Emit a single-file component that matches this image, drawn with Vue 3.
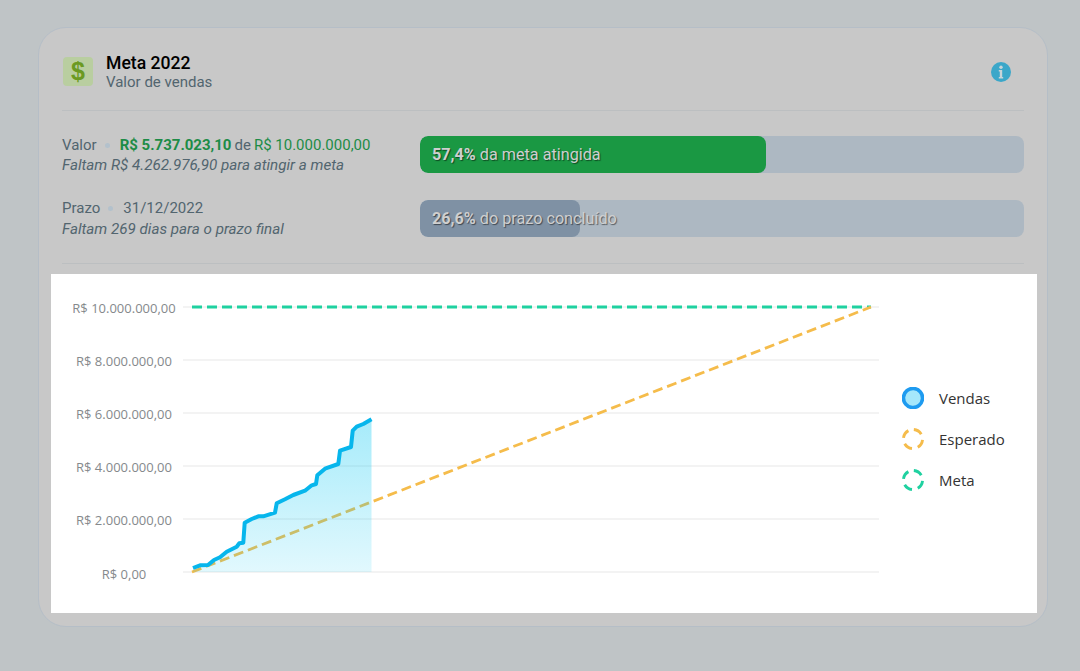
<script setup>
const sales = [[193,568],[200,565.3],[208,565],[214,560],[220,557.3],[226.7,551.7],[236.7,546.7],[239.3,543.3],[243.3,542.7],[244.7,522.7],[251.7,519],[258.3,516.3],[263.3,516.3],[275,512.7],[276.7,503.3],[285,499.3],[293.3,495],[305,490.7],[311.7,485.3],[316,484],[317.3,475.3],[325,468.7],[338.3,464],[340,450.7],[351,447],[352.7,430.7],[356.7,426.7],[363.3,424],[371.5,419.3]]
const offset = ([x, y]) => `${x - 51},${y - 274}`
const line = sales.map(offset).join(' ')
const area = `${line} ${371.5 - 51},${572 - 274} ${193 - 51},${572 - 274}`
const ticks = [
  { label: 'R$ 10.000.000,00', y: 33, ty: 38.5 },
  { label: 'R$ 8.000.000,00', y: 86, ty: 91.5 },
  { label: 'R$ 6.000.000,00', y: 139, ty: 145 },
  { label: 'R$ 4.000.000,00', y: 192, ty: 198 },
  { label: 'R$ 2.000.000,00', y: 245, ty: 251 },
  { label: 'R$ 0,00', y: 298, ty: 304.5 },
]
const legend = [
  { label: 'Vendas', kind: 'sales' },
  { label: 'Esperado', kind: 'expected' },
  { label: 'Meta', kind: 'goal' },
]
</script>

<template>
  <main class="page">
    <section class="card">
      <header class="head">
        <div class="badge">$</div>
        <div class="titles">
          <h1>Meta 2022</h1>
          <p>Valor de vendas</p>
        </div>
        <svg class="info" width="22" height="22" viewBox="0 0 22 22">
          <circle cx="11" cy="11" r="10" fill="#3ba7c9" />
          <circle cx="11" cy="6.2" r="1.7" fill="#c8d4d8" />
          <path d="M8.8 9h3.4v7h1v1.6H8.8V16h1v-5.4h-1z" fill="#c8d4d8" />
        </svg>
      </header>

      <div class="stats">
        <div class="stat">
          <div class="copy">
            <div class="line">
              <span>Valor</span><i class="dot"></i><b class="green">R$ 5.737.023,10</b>
              <span class="de">de</span> <span class="green">R$ 10.000.000,00</span>
            </div>
            <em>Faltam R$ 4.262.976,90 para atingir a meta</em>
          </div>
          <div class="track">
            <div class="fill fill-green"></div>
            <div class="bar-label"><b>57,4%</b> da meta atingida</div>
          </div>
        </div>
        <div class="stat">
          <div class="copy">
            <div class="line">
              <span>Prazo</span><i class="dot"></i><span>31/12/2022</span>
            </div>
            <em>Faltam 269 dias para o prazo final</em>
          </div>
          <div class="track">
            <div class="fill fill-gray"></div>
            <div class="bar-label"><b>26,6%</b> do prazo concluído</div>
          </div>
        </div>
      </div>

      <div class="chart">
        <svg class="plot" width="850" height="339" viewBox="0 0 850 339">
          <defs>
            <linearGradient id="salesFill" x1="0" y1="0" x2="0" y2="1">
              <stop offset="0" stop-color="#09c8f2" stop-opacity="0.36" />
              <stop offset="1" stop-color="#09c8f2" stop-opacity="0.12" />
            </linearGradient>
          </defs>
          <g v-for="t in ticks" :key="t.y">
            <line x1="132" x2="828" :y1="t.y" :y2="t.y" stroke="#efefef" stroke-width="1.5" />
            <text x="73" :y="t.ty" text-anchor="middle" class="tick">{{ t.label }}</text>
          </g>
          <line x1="141" y1="33" x2="820" y2="33" stroke="#1fd1a0" stroke-width="2.8" stroke-dasharray="10 5" />
          <line x1="141" y1="298" x2="820" y2="33" stroke="#f5bc4b" stroke-width="2.8" stroke-dasharray="10 5" />
          <polygon :points="area" fill="url(#salesFill)" />
          <polyline :points="line" fill="none" stroke="#07b6ec" stroke-width="4" stroke-linejoin="round" />
        </svg>
        <ul class="legend">
          <li v-for="item in legend" :key="item.label">
            <svg class="swatch" :class="item.kind" width="22" height="22" viewBox="0 0 22 22">
              <circle cx="11" cy="11" r="9.55" transform="rotate(-85 11 11)" />
            </svg>{{ item.label }}
          </li>
        </ul>
      </div>
    </section>
  </main>
</template>

<style>
html, body { margin: 0; background: #bfc4c6; }
</style>

<style scoped>
.page {
  box-sizing: border-box;
  width: 1080px;
  height: 671px;
  padding: 27px 32px 44px 38px;
  background: #bfc4c6;
  font-family: Roboto, "Liberation Sans", sans-serif;
}
.card {
  box-sizing: border-box;
  width: 1010px;
  height: 600px;
  padding: 0 23px;
  background: #c8c8c8;
  border: 1px solid #b5bec7;
  border-radius: 28px;
}
.head {
  display: flex;
  align-items: center;
  height: 83px;
  padding-top: 5px;
  box-sizing: border-box;
  border-bottom: 1px solid #bcbfc1;
}
.badge {
  display: flex;
  align-items: center;
  justify-content: center;
  width: 30px;
  height: 29px;
  margin: 0 13px 0 1px;
  border-radius: 4px;
  background: #b9cea0;
  color: #6b9a22;
  font: 700 25px "Liberation Sans", sans-serif;
}
.titles { flex: 1; }
h1 {
  margin: 1px 0 0;
  color: #000;
  font-size: 17.6px;
  font-weight: 500;
  line-height: 20px;
}
.titles p {
  margin: 0;
  color: #52656f;
  font-size: 15px;
  line-height: 19px;
}
.info { margin-right: 12px; }
.stats {
  display: flex;
  flex-direction: column;
  gap: 24px;
  height: 153px;
  box-sizing: border-box;
  padding-top: 24px;
  border-bottom: 1px solid #bcbfc1;
}
.stat { display: flex; align-items: center; }
.stat + .stat .line { margin: -1px 0 1px; }
.copy {
  width: 358px;
  color: #52656f;
  font-size: 15px;
  line-height: 20px;
}
.line { display: flex; align-items: center; white-space: pre; }
.dot {
  width: 5px;
  height: 5px;
  margin: 0 10px 0 8px;
  border-radius: 50%;
  background: #b3c1cc;
}
.green { color: #1d8c47; }
b.green { font-weight: 700; }
.de { margin: 0 3px 0 3px; }
em { display: block; font-size: 15.2px; }
.track {
  position: relative;
  flex: 1;
  height: 37px;
  margin-top: -2px;
  border-radius: 8px;
  background: #adb8c2;
  overflow: hidden;
}
.fill { height: 100%; border-radius: 8px; }
.fill-green { width: 346px; background: #1a9843; }
.fill-gray { width: 160px; background: #7f91a4; }
.bar-label {
  position: absolute;
  top: 0;
  left: 12px;
  color: #cfcfcf;
  font-size: 16.2px;
  line-height: 37px;
  text-shadow: 1px 1px 1px rgba(0, 0, 0, 0.5);
}
.chart {
  display: flex;
  width: 986px;
  height: 339px;
  margin: 10px 0 0 -11px;
  background: #fff;
}
.plot { flex: none; display: block; }
.tick {
  fill: #85898c;
  font-family: "Open Sans", sans-serif;
  font-size: 13px;
}
.legend {
  display: flex;
  flex-direction: column;
  gap: 19px;
  margin: 113px 0 0 1px;
  padding: 0;
  list-style: none;
  color: #333;
  font-family: "Open Sans", sans-serif;
  font-size: 15px;
  line-height: 22px;
}
.legend li { display: flex; align-items: center; }
.swatch { flex: none; margin-right: 15px; fill: none; }
.sales { fill: #a5e7fb; stroke: #1e9bf0; stroke-width: 3.6; }
.expected { stroke: #f5bc4b; stroke-width: 2.9; stroke-dasharray: 9 6; }
.goal { stroke: #1fd1a0; stroke-width: 2.9; stroke-dasharray: 9 6; }
</style>
